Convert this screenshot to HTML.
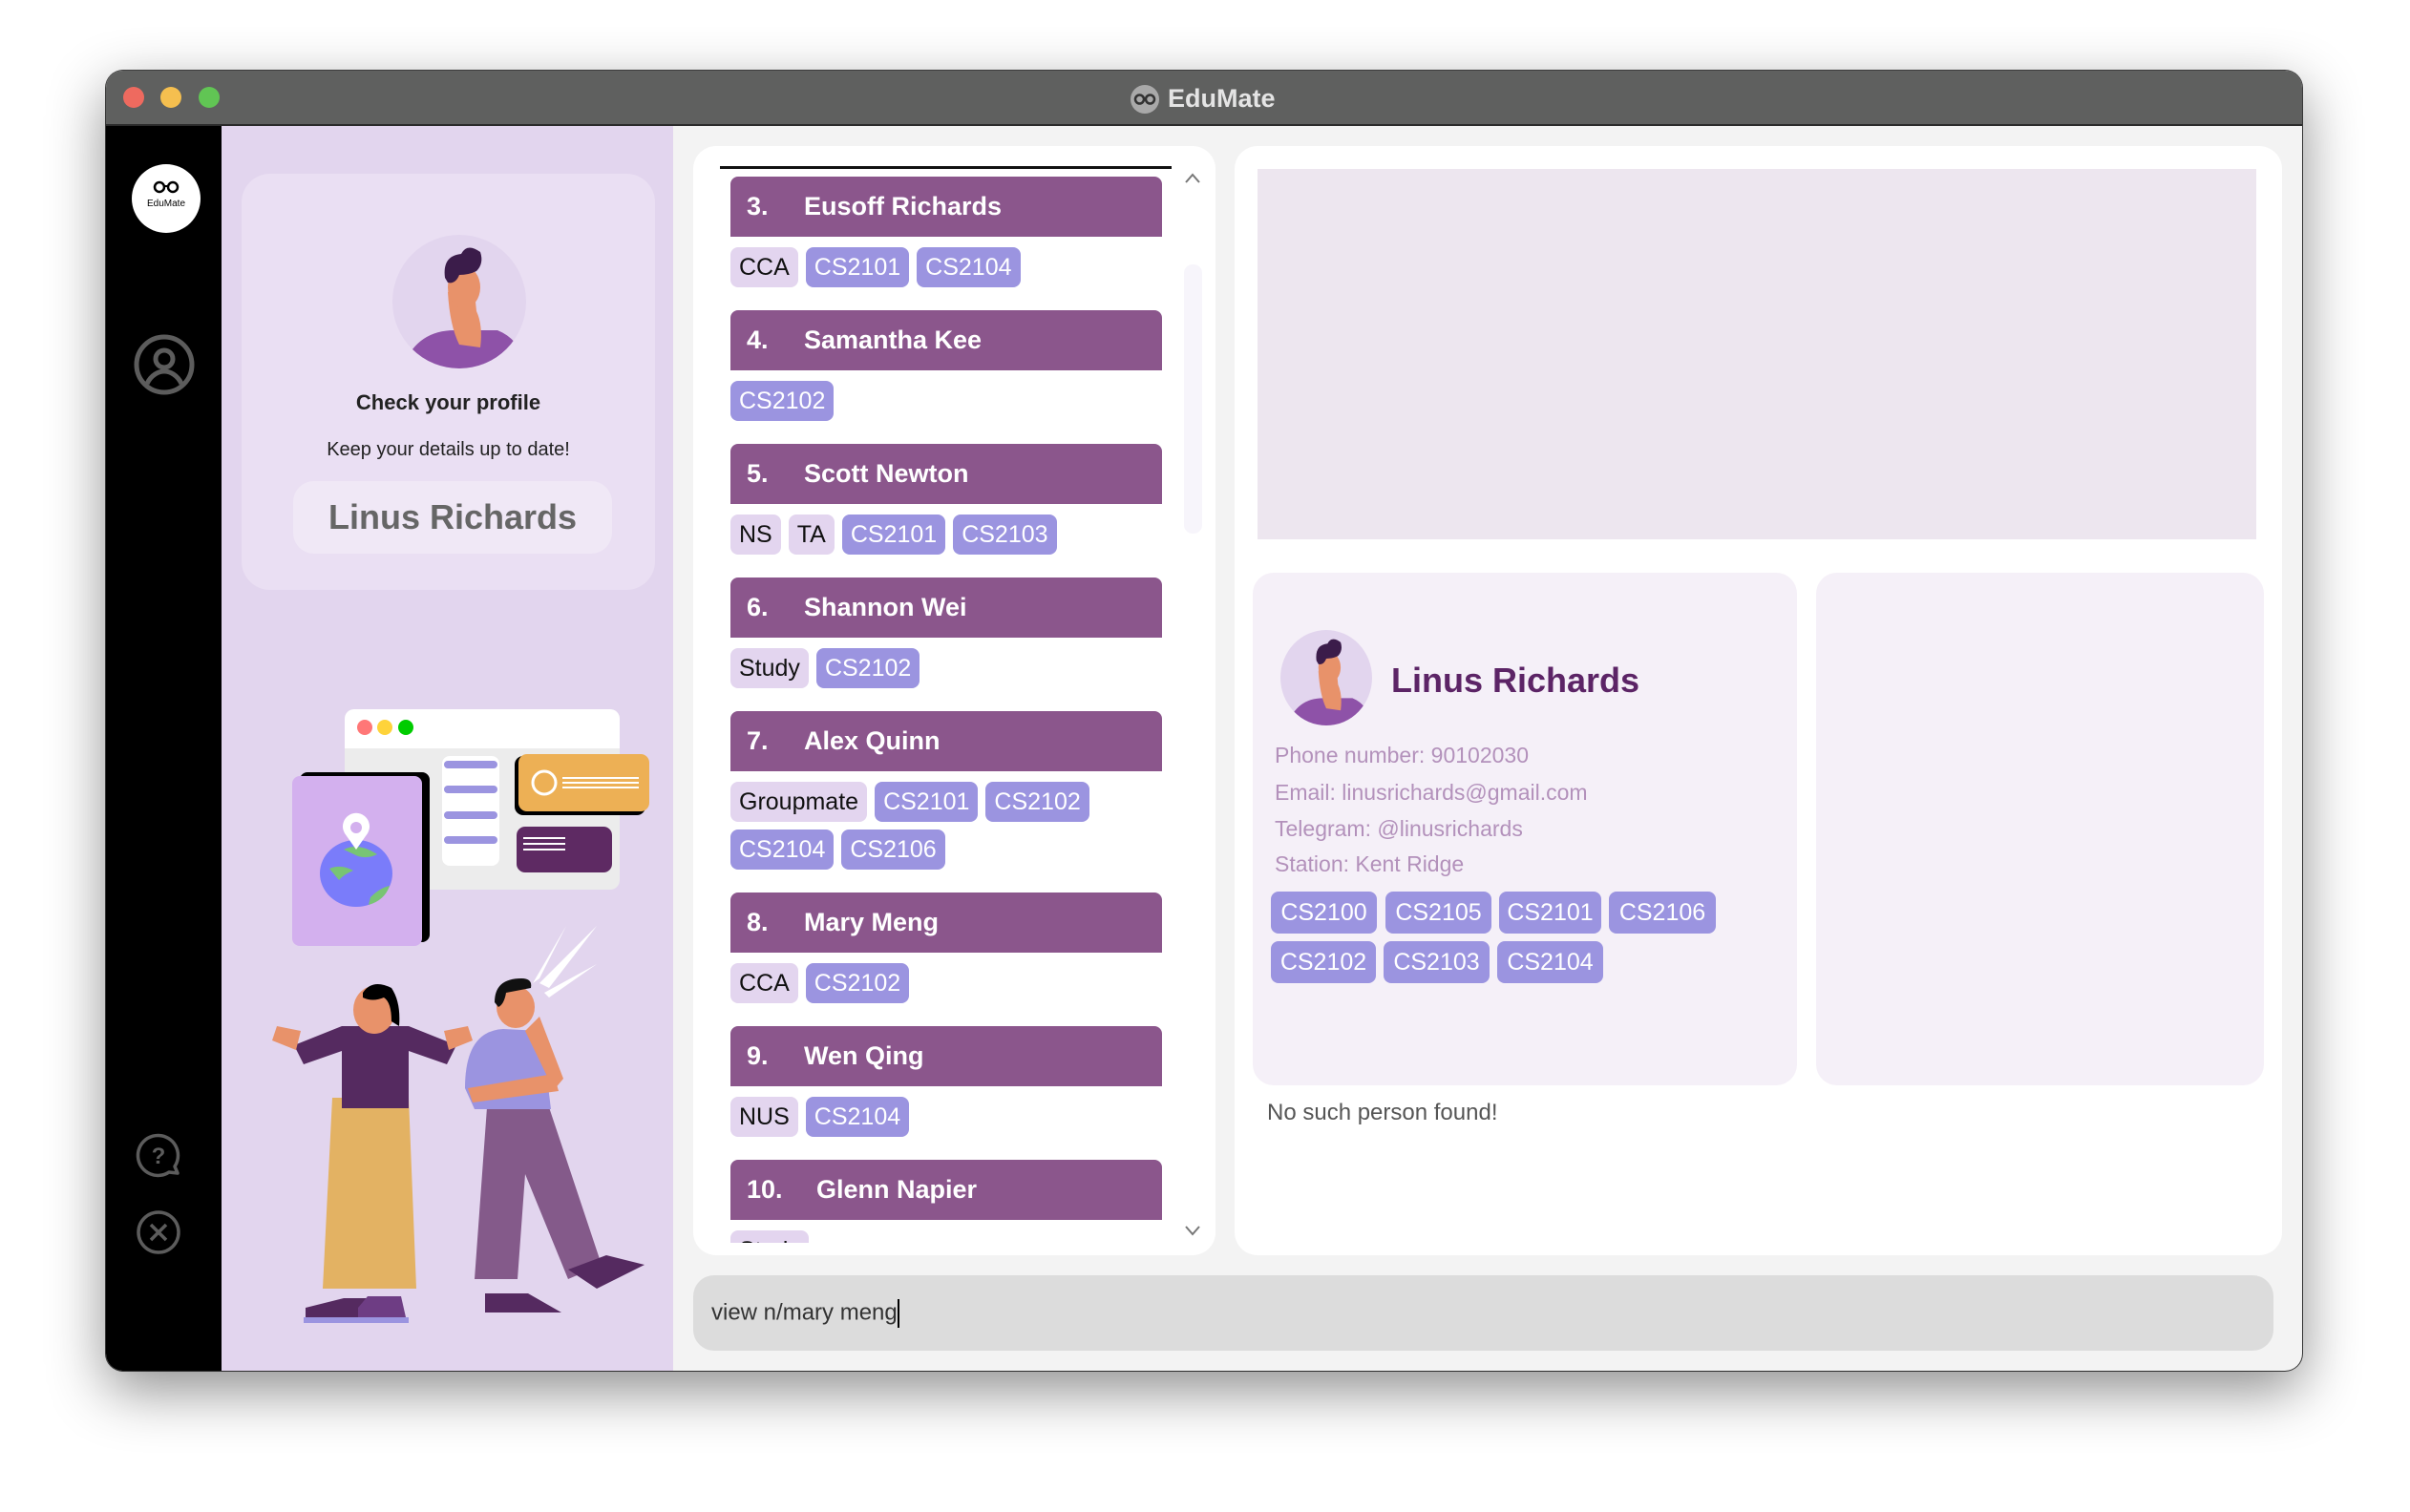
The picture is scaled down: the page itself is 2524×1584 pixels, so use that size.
<!DOCTYPE html>
<html><head><meta charset="utf-8"><style>
*{box-sizing:border-box;margin:0;padding:0}
body{width:2524px;height:1584px;background:#fff;position:relative;overflow:hidden;font-family:"Liberation Sans",sans-serif}
.abs{position:absolute}
.win{left:111px;top:74px;width:2300px;height:1362px;border-radius:18px;overflow:hidden;background:#f3f3f3;box-shadow:0 20px 60px rgba(0,0,0,.45),0 0 0 1px #444}
.title{left:0;top:0;width:2300px;height:58px;background:#5f605f;border-bottom:2px solid #2a2a2a}
.dot{width:22px;height:22px;border-radius:50%;top:17px}
.hdr{position:absolute;left:765px;width:452px;height:63px;background:#8b568c;border-radius:8px 8px 0 0;color:#fff;font-weight:bold;font-size:27px;line-height:63px}
.hdr .n{position:absolute;left:17px}
.hdr .nm{position:absolute;left:77px}
.tags{position:absolute;left:765px;display:flex;gap:8px}
.t{height:42px;line-height:42px;font-size:25px;padding:0 9px;border-radius:8px;background:#9b94e0;color:#fff}
.t.g{background:#e3d5ef;color:#111}
.pt{position:absolute;height:44px;line-height:44px;font-size:25px;background:#9b94e0;color:#fff;border-radius:8px;text-align:center}
.info{position:absolute;left:1335px;font-size:23px;color:#b391bb}
</style></head><body>
<div class="abs win">
 <div class="abs title"></div>
 <div class="abs dot" style="left:18px;background:#ee6a5f"></div>
 <div class="abs dot" style="left:57px;background:#f5bf4f"></div>
 <div class="abs dot" style="left:97px;background:#61c554"></div>
 <svg class="abs" style="left:1072px;top:14px" width="32" height="32" viewBox="0 0 32 32"><circle cx="16" cy="16" r="15" fill="#a9a9a9"/><circle cx="10.5" cy="16" r="4.5" fill="none" stroke="#333" stroke-width="2.5"/><circle cx="21.5" cy="16" r="4.5" fill="none" stroke="#333" stroke-width="2.5"/><path d="M15 15h2" stroke="#333" stroke-width="2"/></svg>
 <div class="abs" style="left:1112px;top:12px;font-size:27px;font-weight:bold;color:#e4e4e4;line-height:34px">EduMate</div>
 <div class="abs" style="left:0;top:58px;width:121px;height:1304px;background:#000"></div>
 <div class="abs" style="left:121px;top:58px;width:473px;height:1304px;background:#e2d5ee"></div>
</div>
<div class="abs" style="left:138px;top:172px;width:72px;height:72px;border-radius:50%;background:#fff;text-align:center">
 <svg width="30" height="14" viewBox="0 0 30 14" style="margin-top:17px"><circle cx="8" cy="7" r="5" fill="none" stroke="#000" stroke-width="2.5"/><circle cx="22" cy="7" r="5" fill="none" stroke="#000" stroke-width="2.5"/><path d="M13 6h4" stroke="#000" stroke-width="2"/></svg>
 <div style="font-size:10px;color:#000;margin-top:0">EduMate</div>
</div>
<svg class="abs" style="left:139px;top:349px" width="66" height="66" viewBox="0 0 66 66"><circle cx="33" cy="33" r="29" fill="none" stroke="#5c5c5c" stroke-width="5"/><circle cx="33" cy="27" r="9" fill="none" stroke="#5c5c5c" stroke-width="5"/><path d="M15 53c4-9 12-13 18-13s14 4 18 13" fill="none" stroke="#5c5c5c" stroke-width="5"/></svg>
<svg class="abs" style="left:140px;top:1184px" width="54" height="54" viewBox="0 0 54 54"><path d="M43 38A21 21 0 1 0 37 44L46 45Z" fill="none" stroke="#5c5c5c" stroke-width="3.5" stroke-linejoin="round"/><text x="26" y="35" font-family="Liberation Sans" font-weight="bold" font-size="24" fill="#5c5c5c" text-anchor="middle">?</text></svg>
<svg class="abs" style="left:140px;top:1265px" width="54" height="54" viewBox="0 0 54 54"><circle cx="26" cy="26" r="21" fill="none" stroke="#5c5c5c" stroke-width="3.5"/><path d="M18 18l16 16M34 18L18 34" stroke="#5c5c5c" stroke-width="3.5"/></svg>

<div class="abs" style="left:253px;top:182px;width:433px;height:436px;border-radius:30px;background:#eadff3"></div>
<svg class="abs" style="left:411px;top:246px" width="140" height="140" viewBox="0 0 140 140">
 <defs><clipPath id="c1"><circle cx="70" cy="70" r="70"/></clipPath></defs>
 <circle cx="70" cy="70" r="70" fill="#e2d5ee"/>
 <g clip-path="url(#c1)">
  <path d="M10 140 Q25 100 65 100 L110 100 Q135 110 140 140Z" fill="#8e52a8"/>
  <path d="M58 60 Q60 95 70 115 L92 118 Q95 95 88 80 L85 50Z" fill="#e8926a"/>
  <ellipse cx="75" cy="55" rx="17" ry="22" fill="#e8926a"/>
  <path d="M55 45 Q52 22 72 20 Q78 8 92 18 Q96 30 88 38 Q80 42 70 42 Q66 52 58 50Z" fill="#3b1c4a"/>
 </g>
</svg>
<div class="abs" style="left:253px;top:409px;width:433px;text-align:center;font-size:22px;font-weight:bold;color:#222">Check your profile</div>
<div class="abs" style="left:253px;top:460px;width:433px;text-align:center;font-size:20px;color:#222">Keep your details up to date!</div>
<div class="abs" style="left:307px;top:504px;width:334px;height:76px;border-radius:22px;background:#f0e8f6;text-align:center;line-height:76px;font-size:36px;font-weight:bold;color:#666">Linus Richards</div>

<svg class="abs" style="left:240px;top:720px" width="480" height="680" viewBox="0 0 480 680">
 <rect x="121" y="23" width="288" height="189" rx="10" fill="#ececec"/>
 <path d="M131 23h268a10 10 0 0 1 10 10v31H121V33a10 10 0 0 1 10-10z" fill="#fff"/>
 <circle cx="142" cy="42" r="8" fill="#f77"/><circle cx="163" cy="42" r="8" fill="#fed33a"/><circle cx="185" cy="42" r="8" fill="#0c0"/>
 <rect x="223" y="72" width="60" height="115" rx="8" fill="#fff"/>
 <rect x="225" y="77" width="56" height="8" rx="4" fill="#9b94e0"/><rect x="225" y="103" width="56" height="8" rx="4" fill="#9b94e0"/><rect x="225" y="130" width="56" height="8" rx="4" fill="#9b94e0"/><rect x="225" y="156" width="56" height="8" rx="4" fill="#9b94e0"/>
 <rect x="299" y="72" width="137" height="62" rx="9" fill="#000"/>
 <rect x="303" y="70" width="137" height="60" rx="9" fill="#edb055"/>
 <circle cx="330" cy="100" r="12" fill="none" stroke="#fff" stroke-width="3"/>
 <path d="M349 95h80M349 100h80M349 105h80" stroke="#fff" stroke-width="2"/>
 <rect x="301" y="146" width="100" height="48" rx="9" fill="#5e2a63"/>
 <path d="M308 158h44M308 164h44M308 170h44" stroke="#fff" stroke-width="2"/>
 <rect x="74" y="89" width="136" height="178" rx="8" fill="#000"/>
 <rect x="66" y="93" width="136" height="178" rx="8" fill="#d3b0ee"/>
 <ellipse cx="133" cy="195" rx="38" ry="35" fill="#7a7cfa"/>
 <path d="M120 170q15-8 35 5q-10 5-20 2z M105 190q12-5 25 2q-10 4-15 10z M148 220q10-10 20-12q-5 15-22 20z" fill="#78c474"/>
 <path d="M133 170l-12-17a14 14 0 1 1 24 0z" fill="#fff"/><circle cx="133" cy="147" r="6" fill="#d3b0ee"/>
 <path d="M98 630l10-200h80l8 200z" fill="#e3b263"/>
 <path d="M68 375l50-20h70l50 20-10 20-40-14v60h-70v-60l-40 14z" fill="#552a60"/>
 <path d="M50 355l25 5-5 20-25-10z M250 355l-25 5 5 20 25-10z" fill="#e8926a"/>
 <ellipse cx="152" cy="338" rx="22" ry="25" fill="#e8926a"/>
 <path d="M140 320q10-15 30-5q10 15 8 40l-8-5q0-20-8-25q-12 5-22 0z" fill="#000"/>
 <path d="M80 650l40-10h30v20h-70z" fill="#552a60"/><path d="M135 650l10-12h35l5 22h-50z" fill="#6e3d84"/>
 <path d="M78 660h110v6H78z" fill="#9b94e0"/>
 <path d="M270 440h65l55 165-35 15-45-110-8 110h-45z" fill="#845a8a"/>
 <path d="M247 420q0-60 40-62l40 2 10 82h-80z" fill="#9b94e0"/>
 <path d="M250 420l90-15 5 18-90 12z" fill="#e8926a"/>
 <path d="M310 360l15-15 25 65-10 12z" fill="#e8926a"/>
 <ellipse cx="300" cy="335" rx="20" ry="22" fill="#e8926a"/>
 <path d="M278 330q0-25 28-25q12 0 10 10l-26 5q-2 12-8 15z" fill="#111"/>
 <path d="M268 635h45l35 20h-80z M355 610l40-15 40 10-50 25z" fill="#552a60"/>
 <path d="M318 310l35-60-28 55z M325 310l60-60-50 65z M330 320l55-30-50 35z" fill="#fff"/>
</svg>

<div class="abs" style="left:726px;top:153px;width:547px;height:1162px;border-radius:24px;background:#fff"></div>
<div class="abs" style="left:754px;top:174px;width:473px;height:3px;background:#111"></div>
<div class="abs" style="left:1240px;top:277px;width:19px;height:282px;border-radius:9px;background:#f7f5fb"></div>
<svg class="abs" style="left:1239px;top:180px" width="20" height="14" viewBox="0 0 20 14"><path d="M3 11l7-8 7 8" fill="none" stroke="#777" stroke-width="2"/></svg>
<svg class="abs" style="left:1239px;top:1282px" width="20" height="14" viewBox="0 0 20 14"><path d="M3 3l7 8 7-8" fill="none" stroke="#777" stroke-width="2"/></svg>
<div class="abs" style="left:726px;top:178px;width:547px;height:1124px;overflow:hidden">
 <div style="position:absolute;left:-726px;top:-178px;width:2000px;height:1600px">
  <div class="hdr" style="top:185px"><span class="n">3.</span><span class="nm">Eusoff Richards</span></div>
  <div class="tags" style="top:259px"><span class="t g">CCA</span><span class="t">CS2101</span><span class="t">CS2104</span></div>
  <div class="hdr" style="top:325px"><span class="n">4.</span><span class="nm">Samantha Kee</span></div>
  <div class="tags" style="top:399px"><span class="t">CS2102</span></div>
  <div class="hdr" style="top:465px"><span class="n">5.</span><span class="nm">Scott Newton</span></div>
  <div class="tags" style="top:539px"><span class="t g">NS</span><span class="t g">TA</span><span class="t">CS2101</span><span class="t">CS2103</span></div>
  <div class="hdr" style="top:605px"><span class="n">6.</span><span class="nm">Shannon Wei</span></div>
  <div class="tags" style="top:679px"><span class="t g">Study</span><span class="t">CS2102</span></div>
  <div class="hdr" style="top:745px"><span class="n">7.</span><span class="nm">Alex Quinn</span></div>
  <div class="tags" style="top:819px"><span class="t g">Groupmate</span><span class="t">CS2101</span><span class="t">CS2102</span></div>
  <div class="tags" style="top:869px"><span class="t">CS2104</span><span class="t">CS2106</span></div>
  <div class="hdr" style="top:935px"><span class="n">8.</span><span class="nm">Mary Meng</span></div>
  <div class="tags" style="top:1009px"><span class="t g">CCA</span><span class="t">CS2102</span></div>
  <div class="hdr" style="top:1075px"><span class="n">9.</span><span class="nm">Wen Qing</span></div>
  <div class="tags" style="top:1149px"><span class="t g">NUS</span><span class="t">CS2104</span></div>
  <div class="hdr" style="top:1215px"><span class="n">10.</span><span class="nm" style="left:90px">Glenn Napier</span></div>
  <div class="tags" style="top:1289px"><span class="t g">Study</span></div>
 </div>
</div>

<div class="abs" style="left:1293px;top:153px;width:1097px;height:1162px;border-radius:24px;background:#fff"></div>
<div class="abs" style="left:1317px;top:177px;width:1046px;height:388px;background:#ede6ef"></div>
<div class="abs" style="left:1312px;top:600px;width:570px;height:537px;border-radius:22px;background:#f5f0f8"></div>
<div class="abs" style="left:1902px;top:600px;width:469px;height:537px;border-radius:22px;background:#f5f0f8"></div>
<svg class="abs" style="left:1341px;top:660px" width="96" height="100" viewBox="0 0 140 140" preserveAspectRatio="none">
 <defs><clipPath id="c2"><ellipse cx="70" cy="70" rx="70" ry="70"/></clipPath></defs>
 <circle cx="70" cy="70" r="70" fill="#e2d5ee"/>
 <g clip-path="url(#c2)">
  <path d="M10 140 Q25 100 65 100 L110 100 Q135 110 140 140Z" fill="#8e52a8"/>
  <path d="M58 60 Q60 95 70 115 L92 118 Q95 95 88 80 L85 50Z" fill="#e8926a"/>
  <ellipse cx="75" cy="55" rx="17" ry="22" fill="#e8926a"/>
  <path d="M55 45 Q52 22 72 20 Q78 8 92 18 Q96 30 88 38 Q80 42 70 42 Q66 52 58 50Z" fill="#3b1c4a"/>
 </g>
</svg>
<div class="abs" style="left:1457px;top:692px;font-size:36px;font-weight:bold;color:#5c2466">Linus Richards</div>
<div class="info" style="top:778px">Phone number: 90102030</div>
<div class="info" style="top:817px">Email: linusrichards@gmail.com</div>
<div class="info" style="top:855px">Telegram: @linusrichards</div>
<div class="info" style="top:892px">Station: Kent Ridge</div>
<div class="pt" style="left:1331px;top:934px;width:111px">CS2100</div>
<div class="pt" style="left:1451px;top:934px;width:111px">CS2105</div>
<div class="pt" style="left:1570px;top:934px;width:107px">CS2101</div>
<div class="pt" style="left:1685px;top:934px;width:112px">CS2106</div>
<div class="pt" style="left:1331px;top:986px;width:110px">CS2102</div>
<div class="pt" style="left:1449px;top:986px;width:111px">CS2103</div>
<div class="pt" style="left:1568px;top:986px;width:111px">CS2104</div>
<div class="abs" style="left:1327px;top:1152px;font-size:24px;color:#555">No such person found!</div>

<div class="abs" style="left:726px;top:1336px;width:1655px;height:79px;border-radius:22px;background:#dcdcdc"></div>
<div class="abs" style="left:745px;top:1361px;font-size:24px;color:#333">view n/mary meng<span style="display:inline-block;width:2px;height:30px;background:#000;vertical-align:middle"></span></div>
</body></html>
